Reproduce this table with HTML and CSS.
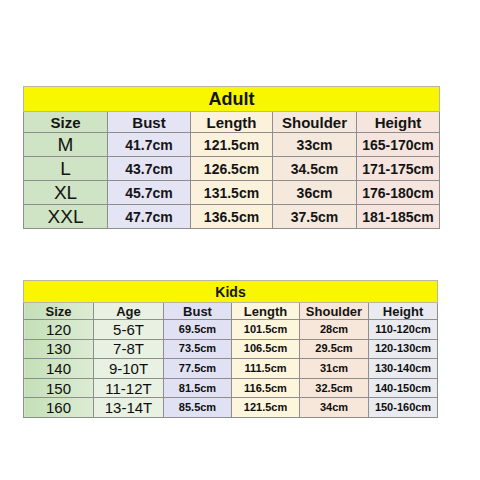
FILE: index.html
```html
<!DOCTYPE html>
<html>
<head>
<meta charset="utf-8">
<link rel="stylesheet" href="styles.css">
</head>
<body>
<div class="page">
  <table class="chart adult">
    <colgroup>
      <col class="c-size"><col class="c-bust"><col class="c-length"><col class="c-shoulder"><col class="c-height">
    </colgroup>
    <thead>
      <tr class="title"><th colspan="5">Adult</th></tr>
      <tr class="head">
        <th class="size">Size</th><th class="bust">Bust</th><th class="length">Length</th><th class="shoulder">Shoulder</th><th class="height">Height</th>
      </tr>
    </thead>
    <tbody>
      <tr><td class="size">M</td><td class="bust">41.7cm</td><td class="length">121.5cm</td><td class="shoulder">33cm</td><td class="height">165-170cm</td></tr>
      <tr><td class="size">L</td><td class="bust">43.7cm</td><td class="length">126.5cm</td><td class="shoulder">34.5cm</td><td class="height">171-175cm</td></tr>
      <tr><td class="size">XL</td><td class="bust">45.7cm</td><td class="length">131.5cm</td><td class="shoulder">36cm</td><td class="height">176-180cm</td></tr>
      <tr><td class="size">XXL</td><td class="bust">47.7cm</td><td class="length">136.5cm</td><td class="shoulder">37.5cm</td><td class="height">181-185cm</td></tr>
    </tbody>
  </table>

  <table class="chart kids">
    <colgroup>
      <col class="k-size"><col class="k-age"><col class="k-bust"><col class="k-length"><col class="k-shoulder"><col class="k-height">
    </colgroup>
    <thead>
      <tr class="title"><th colspan="6">Kids</th></tr>
      <tr class="head">
        <th class="size">Size</th><th class="age">Age</th><th class="bust">Bust</th><th class="length">Length</th><th class="shoulder">Shoulder</th><th class="height">Height</th>
      </tr>
    </thead>
    <tbody>
      <tr><td class="size">120</td><td class="age">5-6T</td><td class="bust">69.5cm</td><td class="length">101.5cm</td><td class="shoulder">28cm</td><td class="height">110-120cm</td></tr>
      <tr><td class="size">130</td><td class="age">7-8T</td><td class="bust">73.5cm</td><td class="length">106.5cm</td><td class="shoulder">29.5cm</td><td class="height">120-130cm</td></tr>
      <tr><td class="size">140</td><td class="age">9-10T</td><td class="bust">77.5cm</td><td class="length">111.5cm</td><td class="shoulder">31cm</td><td class="height">130-140cm</td></tr>
      <tr><td class="size">150</td><td class="age">11-12T</td><td class="bust">81.5cm</td><td class="length">116.5cm</td><td class="shoulder">32.5cm</td><td class="height">140-150cm</td></tr>
      <tr><td class="size">160</td><td class="age">13-14T</td><td class="bust">85.5cm</td><td class="length">121.5cm</td><td class="shoulder">34cm</td><td class="height">150-160cm</td></tr>
    </tbody>
  </table>
</div>
</body>
</html>
```

FILE: styles.css
```css
html, body {
  margin: 0;
  padding: 0;
  background: #ffffff;
}

.page {
  padding: 86px 0 0 23px;
  font-family: "Liberation Sans", Arial, sans-serif;
  color: #141414;
}

.chart {
  border-collapse: collapse;
  table-layout: fixed;
  border: 1px solid #a8a8a8;
}

.chart th,
.chart td {
  border: 1px solid #8e8e8e;
  padding: 0;
  text-align: center;
  vertical-align: middle;
  white-space: nowrap;
  line-height: 1;
}

.title th {
  background: #f8f700;
  font-weight: bold;
  border-color: #b8b8a0;
}

.head th {
  font-weight: bold;
}

/* ---------- Adult ---------- */
.adult { width: 416px; }
.adult .c-size { width: 84px; }
.adult .c-bust { width: 83px; }
.adult .c-length { width: 82px; }
.adult .c-shoulder { width: 84px; }
.adult .c-height { width: 83px; }

.adult .title th { height: 24px; font-size: 18px; }
.adult .head th { height: 20px; font-size: 15px; }
.adult tbody td { height: 23px; font-size: 14px; font-weight: bold; }
.adult tbody td.size { font-size: 19px; font-weight: normal; }

.adult .size { background: #cfe4c4; }
.adult .bust { background: #e4e4f5; }
.adult .length { background: #fcf2dc; }
.adult .shoulder { background: #f5e8dd; }
.adult .height { background: #f5e5de; }

/* ---------- Kids ---------- */
.kids {
  width: 414px;
  margin-top: 51px;
}
.kids .k-size { width: 70px; }
.kids .k-age { width: 70px; }
.kids .k-bust { width: 68px; }
.kids .k-length { width: 68px; }
.kids .k-shoulder { width: 69px; }
.kids .k-height { width: 69px; }

.kids .title th { height: 21px; font-size: 14px; }
.kids .head th { height: 16px; font-size: 13px; }
.kids tbody td { height: 18.6px; font-size: 11px; font-weight: bold; color: #0e0e0e; }
.kids tbody td.size,
.kids tbody td.age { font-size: 15px; font-weight: normal; }

.kids .size { background: linear-gradient(to right, #c4dfb8, #dcecd3); }
.kids .age { background: #e8f1e2; }
.kids .bust { background: #e0e2f4; }
.kids .length { background: #fdf5dc; }
.kids .shoulder { background: #f7e6da; }
.kids .height { background: #e9ebf1; }
```
